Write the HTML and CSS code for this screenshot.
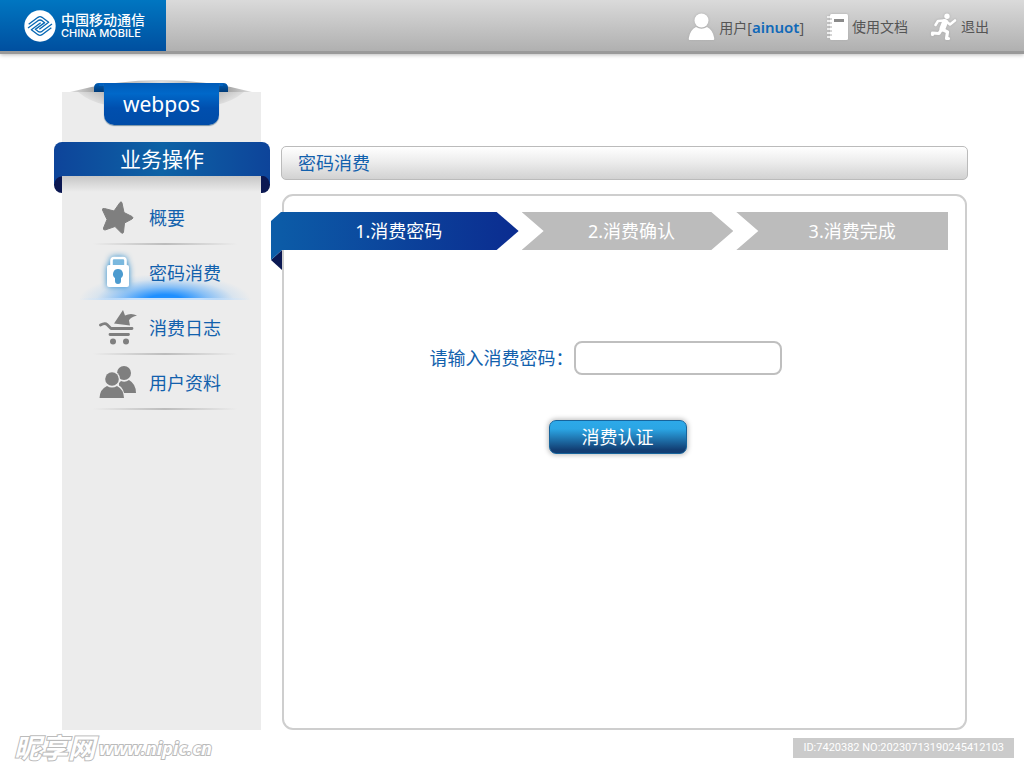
FILE: index.html
```html
<!DOCTYPE html>
<html lang="zh-CN">
<head>
<meta charset="utf-8">
<meta name="viewport" content="width=device-width, initial-scale=1">
<title>webpos - 密码消费</title>
<link rel="stylesheet" href="styles.css">
</head>
<body>
<header class="topbar">
  <a class="brand" href="#">
    <svg class="brand-mark" viewBox="0 0 96 96" aria-hidden="true">
      <circle cx="48" cy="48" r="47" fill="#fff"/>
      <g fill="none" stroke="#0868b4" stroke-width="4" stroke-linejoin="round">
        <path d="M14 43L42 22Q48 18 54 22L74 37L46 58"/>
        <path d="M82 53L54 74Q48 78 42 74L22 59L50 38"/>
        <path d="M12 54L42 32Q48 28 54 32L62 38L34 58L42 64Q48 68 54 64L84 42"/>
      </g>
    </svg>
    <span class="brand-text"><span class="brand-cn">中国移动通信</span><span class="brand-en">CHINA MOBILE</span></span>
  </a>
  <nav class="tools" aria-label="用户工具">
    <a class="tool" href="#">
      <svg class="tool-icon" viewBox="0 0 27 28" aria-hidden="true"><g fill="#fff"><circle cx="13.500" cy="7.500" r="7"/><path d="M1.500 27Q.5 27 .8 25Q2 17 8 14Q13.500 17.500 19 14Q25 17 26.200 25Q26.500 27 25.500 27Z"/></g></svg>
      <span>用户[<b class="username">ainuot</b>]</span>
    </a>
    <a class="tool" href="#">
      <svg class="tool-icon tool-icon-doc" viewBox="0 0 22 28" aria-hidden="true"><rect x="4" y="1" width="18" height="26" rx="1.500" fill="#fff"/><path d="M1 4H6M1 8H6M1 12H6M1 16H6M1 20H6M1 24H6" stroke="#fff" stroke-width="1.600"/><path d="M4 6H6M4 10H6M4 14H6M4 18H6M4 22H6" stroke="#aaa"/><rect x="8" y="6" width="10" height="3" fill="#8b8b8b"/></svg>
      <span>使用文档</span>
    </a>
    <a class="tool" href="#">
      <svg class="tool-icon" viewBox="0 0 27 28" aria-hidden="true"><circle cx="17" cy="3.200" r="2.700" fill="#fff"/><g fill="none" stroke="#fff" stroke-linecap="round" stroke-linejoin="round"><path d="M15 9L12.500 15.500" stroke-width="6"/><path d="M14 7.500L8 8L5.500 12M17 9L20 11.500L25 7.500" stroke-width="2.600"/><path d="M11.500 16.500L9 20.500L2.500 20V21.500M12.500 16.500L17.500 19L16.500 25.500H18.500" stroke-width="3.200"/></g></svg>
      <span>退出</span>
    </a>
  </nav>
</header>

<div class="layout">
  <aside class="sidebar">
    <div class="tab">
      <svg class="tab-fold" viewBox="0 0 182 34" aria-hidden="true">
        <defs>
          <linearGradient id="paper" x1="0" x2="1"><stop offset="0" stop-color="#ddd"/><stop offset=".16" stop-color="#999"/><stop offset=".5" stop-color="#ddd"/><stop offset=".84" stop-color="#999"/><stop offset="1" stop-color="#ddd"/></linearGradient>
          <linearGradient id="shade-left" x1="1" y1="0" x2="0.2" y2=".7"><stop offset="0" stop-color="#b8b8b8"/><stop offset="1" stop-color="#ececec"/></linearGradient>
          <linearGradient id="shade-right" x1="0" y1="0" x2=".8" y2=".7"><stop offset="0" stop-color="#b8b8b8"/><stop offset="1" stop-color="#ececec"/></linearGradient>
          <linearGradient id="rim" x1="0" x2="0" y1="0" y2="1"><stop offset="0" stop-color="#005cb4"/><stop offset="1" stop-color="#003b78"/></linearGradient>
        </defs>
        <path d="M0 12Q91-12 182 12Z" fill="url(#paper)"/>
        <path d="M8 12H36V25Q20 22 8 12Z" fill="url(#shade-left)"/>
        <path d="M174 12H146V25Q162 22 174 12Z" fill="url(#shade-right)"/>
        <path d="M24 12V8Q24 3 29 3H153Q158 3 158 8V12Z" fill="url(#rim)"/>
        <path d="M29 3H153V6H29Z" fill="#0060bd"/>
      </svg>
      <span class="tab-label">webpos</span>
    </div>
    <h2 class="ribbon">业务操作</h2>
    <nav class="menu" aria-label="业务操作">
      <a class="menu-item" href="#">
        <svg class="menu-icon" viewBox="0 0 38 36" aria-hidden="true"><path d="M21 2.500Q22.500 1 23 3L25 12.500L33 16.500Q35 18 33 19L25.500 23L24.500 32Q24 34 22.500 33L16 26.500L6 30Q4 30 4.500 28L8 19.500L3.500 10Q3 8 5.500 8.500L15 11Z" fill="#7f7f7f" stroke="#7f7f7f" stroke-linejoin="round"/></svg>
        <span>概要</span>
      </a>
      <a class="menu-item active" href="#" aria-current="page">
        <svg class="menu-icon" viewBox="0 0 38 36" aria-hidden="true"><rect x="13" y="4" width="13" height="8" fill="#7ab8de"/><path d="M12.500 10V5.500Q12.500 3 15 3H24Q26.500 3 26.500 5.500V10" fill="none" stroke="#fff" stroke-width="2.600"/><rect x="8" y="10" width="22" height="22" rx="2" fill="#fff"/><path d="M19 14A5 5 0 0 0 16 23V26Q16 29 19 29Q22 29 22 26V23A5 5 0 0 0 19 14Z" fill="#4c9bcf"/></svg>
        <span>密码消费</span>
      </a>
      <a class="menu-item" href="#">
        <svg class="menu-icon" viewBox="0 0 38 36" aria-hidden="true"><g fill="none" stroke="#7f7f7f" stroke-width="2.800" stroke-linecap="round" stroke-linejoin="round"><path d="M1.500 15Q6 12.500 8 14.500L12 18.500H33M11 24.500H29.500"/></g><circle cx="14" cy="31.500" r="3" fill="#7f7f7f"/><circle cx="27" cy="31.500" r="3" fill="#7f7f7f"/><path d="M15 13.500L24 0L26 5.500Q32 2.500 38 5.500Q31 7.500 30 10.500L31 15.500Z" fill="#7f7f7f"/></svg>
        <span>消费日志</span>
      </a>
      <a class="menu-item" href="#">
        <svg class="menu-icon" viewBox="0 0 38 36" aria-hidden="true"><g fill="#7f7f7f"><circle cx="25" cy="8" r="7"/><path d="M20 28V18L22 16Q26 18 30 15Q37 19 37 28Z"/><circle cx="13" cy="14" r="8" fill="#ececec"/><circle cx="13" cy="14" r="6.800"/><path d="M0 35Q0 23 8 19.500Q13 23.500 18.500 19.500Q26 23 26 35Z" fill="#ececec"/><path d="M.5 33Q1 24 8 21Q13 24 18 21Q24.500 24 25 33Z"/></g></svg>
        <span>用户资料</span>
      </a>
    </nav>
  </aside>

  <main class="content">
    <h1 class="page-title">密码消费</h1>
    <section class="panel">
      <ol class="steps">
        <li class="step step-current" aria-current="step"><span class="step-shape">1.消费密码</span></li>
        <li class="step step-middle"><span class="step-shape">2.消费确认</span></li>
        <li class="step step-last"><span class="step-shape">3.消费完成</span></li>
      </ol>
      <form class="pay-form" action="#">
        <div class="field">
          <label for="pay-password">请输入消费密码：</label>
          <input class="field-input" id="pay-password" type="password">
        </div>
        <button class="submit" type="submit">消费认证</button>
      </form>
    </section>
  </main>
</div>

<footer class="footer">
  <div class="watermark"><span class="watermark-cn">昵享网</span><span class="watermark-url">www.nipic.cn</span></div>
  <div class="serial">ID:7420382 NO:20230713190245412103</div>
</footer>
</body>
</html>
```
FILE: styles.css
```css
* { box-sizing: border-box; }

body {
  display: flex;
  flex-direction: column;
  min-height: 100vh;
  margin: 0;
  background: #fff;
  color: #1261ad;
  font-family: "Noto Sans", "Noto Sans CJK SC", sans-serif;
  font-size: 18px;
  line-height: 24px;
}

a { color: inherit; text-decoration: none; }
h1, h2 { margin: 0; font-size: 18px; font-weight: 400; }

/* Top bar */
.topbar {
  display: flex;
  justify-content: space-between;
  height: 54px;
  padding-right: 35px;
  border-bottom: 3px solid #999;
  background: linear-gradient(#dadada, #b0b0b0);
  box-shadow: 0 1px 4px #bbb;
}
.brand {
  display: flex;
  align-items: center;
  gap: 5px;
  width: 166px;
  padding: 1px 0 0 24px;
  background: linear-gradient(#0076c1, #004f9f);
  color: #fff;
}
.brand-mark { width: 32px; height: 32px; }
.brand-text { display: flex; flex-direction: column; }
.brand-cn { font-size: 14px; font-weight: 500; line-height: 15px; }
.brand-en { font: 500 11px/13px Inter, sans-serif; }
.tools { display: flex; align-items: center; gap: 22px; padding-top: 3px; }
.tool {
  display: flex;
  align-items: center;
  gap: 4px;
  color: #555;
  font-size: 14px;
}
.tool-icon { width: 27px; height: 28px; filter: drop-shadow(0 0 1px #aaa); }
.tool-icon-doc { width: 22px; }
.username { color: #1169b8; font-size: 15px; font-weight: 600; }

/* Page columns */
.layout {
  display: flex;
  flex: 1;
  gap: 20px;
  padding: 38px 56px 0 62px;
}
.sidebar { flex: none; width: 199px; background: #ececec; }
.tab { position: relative; width: 115px; margin: -9px auto 0 42px; }
.tab-fold { position: absolute; top: -3px; left: -34px; width: 182px; height: 34px; }
.tab-label {
  position: relative;
  display: block;
  height: 42px;
  border-radius: 0 0 10px 10px;
  background: linear-gradient(#005bb8, #0068c9 25%, #004fae 60%, #004ca8);
  box-shadow: 0 1px 1px #7893a5;
  color: #fff;
  font-size: 21px;
  line-height: 42px;
  text-align: center;
}
.ribbon {
  position: relative;
  height: 34px;
  margin: 17px -9px 0 -8px;
  border-radius: 8px 8px 0 0;
  background: linear-gradient(90deg, #0d449a, #0d62a5 50%, #0d449a);
  color: #fff;
  font-size: 21px;
  line-height: 34px;
  text-align: center;
}
.ribbon::before,
.ribbon::after {
  content: "";
  position: absolute;
  top: 100%;
  width: 9px;
  height: 17px;
}
.ribbon::before {
  left: 0;
  width: 8px;
  border-radius: 0 0 0 8px;
  background: radial-gradient(circle at 100% 8px, #0b1852 7px, #0d449a 8px) top / 100% 8px no-repeat #0b1852;
}
.ribbon::after {
  right: 0;
  border-radius: 0 0 8px 0;
  background: radial-gradient(circle at 0 8px, #0b1852 8px, #0d449a 9px) top / 100% 8px no-repeat #0b1852;
}

/* Menu */
.menu {
  padding: 14px 10px 0 17px;
  background: linear-gradient(#c6c6c6, #ececec) top / 100% 16px no-repeat;
}
.menu-item {
  display: flex;
  align-items: center;
  gap: 12px;
  height: 55px;
  padding-left: 20px;
  background: linear-gradient(90deg, transparent 8%, #bcbcbc 50%, transparent 92%) bottom / 100% 2px no-repeat;
}
.menu-icon { width: 38px; height: 36px; }
.menu-item.active {
  background:
    linear-gradient(90deg, transparent, #c9e2fc 30%, #c9e2fc 70%, transparent) bottom / 100% 2px no-repeat,
    radial-gradient(50% 100% at 50% 100%, #1e8fff 20%, #5aabfab0 50%, #a0ccf540 80%, transparent) bottom / 100% 26px no-repeat;
}
.active .menu-icon { filter: drop-shadow(0 0 3px #2388cc); }

/* Main column */
.content {
  display: flex;
  flex: 1;
  flex-direction: column;
  gap: 14px;
  min-width: 0;
  padding-top: 54px;
}
.page-title {
  height: 34px;
  padding: 0 16px;
  border: 1px solid #bbb;
  border-radius: 5px;
  background: linear-gradient(#fff, #ededed 45%, #d2d2d2);
  line-height: 32px;
}
.panel {
  flex: 1;
  margin: 0 1px;
  border: 2px solid #cecece;
  border-radius: 11px;
}
.steps {
  display: flex;
  gap: 3px;
  margin: 16px 17px 0 -13px;
  padding: 0;
  list-style: none;
  color: #fff;
}
.step { position: relative; flex: 212; }
.step-current { flex: 248; }
.step-shape {
  display: block;
  height: 38px;
  background: #bcbcbc;
  line-height: 38px;
  text-align: center;
}
.step-current .step-shape {
  padding-left: 8px;
  background: linear-gradient(90deg, #0c5da8, #0b2c90);
  clip-path: polygon(10px 0, calc(100% - 22px) 0, 100% 50%, calc(100% - 22px) 100%, 0 100%, 0 9px);
}
.step-current::before,
.step-current::after {
  content: "";
  position: absolute;
  top: 100%;
  left: 0;
  width: 11px;
  height: 20px;
}
.step-current::before { background: #0b1852; clip-path: polygon(100% 0, 100% 100%, 0 50%); }
.step-current::after { background: #0c5da8; clip-path: polygon(0 0, 100% 0, 0 50%); }
.step-middle .step-shape {
  padding-left: 8px;
  clip-path: polygon(0 0, calc(100% - 22px) 0, 100% 50%, calc(100% - 22px) 100%, 0 100%, 22px 50%);
}
.step-last .step-shape {
  padding-left: 20px;
  clip-path: polygon(0 0, 100% 0, 100% 100%, 0 100%, 22px 50%);
}

/* Form */
.pay-form {
  display: flex;
  flex-direction: column;
  align-items: center;
  gap: 45px;
  padding: 91px 38px 40px 0;
}
.field { display: flex; align-items: center; }
.field-input {
  width: 208px;
  height: 34px;
  padding: 0 10px;
  border: 2px solid #bfbfbf;
  border-radius: 8px;
  background: #fff;
  color: inherit;
  font: inherit;
}
.submit {
  width: 138px;
  height: 34px;
  margin-left: 24px;
  padding: 0;
  border: 1px solid #17649b;
  border-radius: 7px;
  background: linear-gradient(#2da9e9, #2ba5e4 25%, #123e73 90%);
  box-shadow: 0 0 5px 1px #bbb;
  color: #fff;
  font: inherit;
  cursor: pointer;
}

/* Footer */
.footer {
  display: flex;
  align-items: center;
  justify-content: space-between;
  height: 38px;
  padding: 0 10px 2px 14px;
}
.watermark {
  display: flex;
  align-items: center;
  gap: 4px;
  color: #fff;
  font-style: italic;
  font-weight: 700;
  paint-order: stroke fill;
  -webkit-text-stroke: 2px #bbb;
}
.watermark-cn { font-size: 27px; font-weight: 700; }
.watermark-url { font-size: 18px; }
.serial {
  padding: 0 10px;
  background: #cbcbcb;
  color: #fff;
  font-family: Roboto, sans-serif;
  font-size: 11px;
  line-height: 20px;
}
```
